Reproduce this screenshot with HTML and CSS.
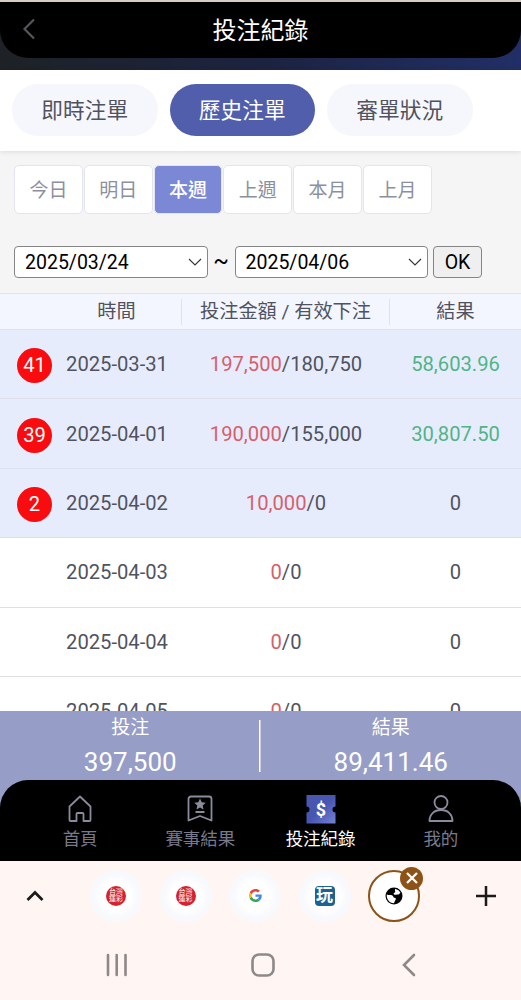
FILE: index.html
```
<!DOCTYPE html>
<html lang="zh-Hant">
<head>
  <meta charset="utf-8">
  <meta name="viewport" content="width=device-width, initial-scale=1">
  <title>投注紀錄</title>
  <link rel="stylesheet" href="styles.css">
</head>
<body>
<div class="app">
  <div class="top">
    <header class="header">
      <svg class="back" width="14" height="22" viewBox="0 0 14 22"><path d="M12 1.500 2.500 11l9.500 9.500"/></svg>
      <h1>投注紀錄</h1>
    </header>
  </div>

  <nav class="tabs">
    <a class="tab">即時注單</a>
    <a class="tab active">歷史注單</a>
    <a class="tab">審單狀況</a>
  </nav>

  <section class="filter">
    <div class="days">
      <a class="day">今日</a>
      <a class="day">明日</a>
      <a class="day active">本週</a>
      <a class="day">上週</a>
      <a class="day">本月</a>
      <a class="day">上月</a>
    </div>
    <div class="range">
      <div class="select">2025/03/24<svg width="14" height="8" viewBox="0 0 14 8"><path d="M1 1l6 6 6-6"/></svg></div>
      <span class="tilde">~</span>
      <div class="select">2025/04/06<svg width="14" height="8" viewBox="0 0 14 8"><path d="M1 1l6 6 6-6"/></svg></div>
      <button class="ok">OK</button>
    </div>
  </section>

  <main class="list">
    <div class="row head">
      <span></span>
      <span class="time">時間</span>
      <span class="amount">投注金額 / 有效下注</span>
      <span class="result">結果</span>
    </div>
    <div class="row has-bet">
      <span class="count">41</span>
      <span class="time">2025-03-31</span>
      <span class="amount"><em>197,500</em>/180,750</span>
      <span class="result win">58,603.96</span>
    </div>
    <div class="row has-bet">
      <span class="count">39</span>
      <span class="time">2025-04-01</span>
      <span class="amount"><em>190,000</em>/155,000</span>
      <span class="result win">30,807.50</span>
    </div>
    <div class="row has-bet">
      <span class="count">2</span>
      <span class="time">2025-04-02</span>
      <span class="amount"><em>10,000</em>/0</span>
      <span class="result">0</span>
    </div>
    <div class="row">
      <span></span>
      <span class="time">2025-04-03</span>
      <span class="amount"><em>0</em>/0</span>
      <span class="result">0</span>
    </div>
    <div class="row">
      <span></span>
      <span class="time">2025-04-04</span>
      <span class="amount"><em>0</em>/0</span>
      <span class="result">0</span>
    </div>
    <div class="row">
      <span></span>
      <span class="time">2025-04-05</span>
      <span class="amount"><em>0</em>/0</span>
      <span class="result">0</span>
    </div>
  </main>

  <div class="bottom">
    <div class="total">
      <div class="sum"><span>投注</span><b>397,500</b></div>
      <div class="sum"><span>結果</span><b>89,411.46</b></div>
    </div>
    <nav class="menu">
      <a class="item">
        <svg width="30" height="30" viewBox="0 0 30 30"><path d="M4.500 12.500 15 2.500l10.500 10V26a1 1 0 0 1-1 1H18.500v-7a1 1 0 0 0-1-1h-5a1 1 0 0 0-1 1v7H5.500a1 1 0 0 1-1-1z"/></svg>
        首頁
      </a>
      <a class="item">
        <svg width="30" height="30" viewBox="0 0 30 30"><path d="M6 2.500h18a2.500 2.500 0 0 1 2.500 2.500v21.500L15 22 3.500 26.500V5A2.500 2.500 0 0 1 6 2.500zM10.500 18h9"/><path class="solid" d="m15 4.500 1.700 3.800 4 .5-3 2.700.8 4.100-3.500-2-3.500 2 .8-4.100-3-2.700 4-.5z"/></svg>
        賽事結果
      </a>
      <a class="item active">
        <svg width="30" height="30" viewBox="0 0 30 30">
          <defs><linearGradient id="ticket" x1="0" y1="0" x2="1" y2="1"><stop offset="0" stop-color="#4a58ae"/><stop offset=".5" stop-color="#4856b2"/><stop offset="1" stop-color="#7482d6"/></linearGradient></defs>
          <path class="ticket" d="M.5 1h29v11.500a3 3 0 0 0 0 6V29.500H.5v-11a3 3 0 0 0 0-6z"/>
          <text x="15" y="21.500">$</text>
        </svg>
        投注紀錄
      </a>
      <a class="item">
        <svg width="30" height="30" viewBox="0 0 30 30"><circle cx="15" cy="8.500" r="6.500"/><path d="M3.500 27c0-6.500 4.500-11 11.500-11s11.500 4.500 11.500 11z"/></svg>
        我的
      </a>
    </nav>
  </div>

  <div class="browser">
    <svg class="up" width="18" height="12" viewBox="0 0 18 12"><path d="M1.500 10 9 2.500l7.500 7.500"/></svg>
    <div class="site"><span class="lottery">台灣<br>運彩</span></div>
    <div class="site"><span class="lottery">台灣<br>運彩</span></div>
    <div class="site">
      <svg width="13" height="13" viewBox="0 0 48 48">
        <path fill="#ea4335" d="M24 9.500c3.500 0 6.700 1.200 9.200 3.600l6.900-6.900C35.900 2.400 30.500 0 24 0 14.600 0 6.500 5.400 2.600 13.200l8 6.200C12.400 13.700 17.700 9.500 24 9.500z"/>
        <path fill="#4285f4" d="M47 24.600c0-1.600-.2-3.100-.4-4.600H24v9h12.900c-.6 3-2.300 5.500-4.800 7.200l7.700 6C44.400 38 47 31.800 47 24.600z"/>
        <path fill="#fbbc05" d="M10.500 28.600c-.5-1.500-.8-3-.8-4.600s.3-3.100.8-4.600l-8-6.200C.9 16.500 0 20.100 0 24s.9 7.500 2.600 10.800z"/>
        <path fill="#34a853" d="M24 48c6.500 0 11.900-2.100 15.900-5.800l-7.700-6c-2.200 1.500-4.900 2.300-8.200 2.300-6.300 0-11.600-4.200-13.500-9.900l-8 6.200C6.500 42.600 14.600 48 24 48z"/>
      </svg>
    </div>
    <div class="site"><span class="play">玩</span></div>
    <div class="site current">
      <svg width="18" height="18" viewBox="0 0 18 18"><circle cx="9" cy="9" r="8.500"/><path class="land" d="M1.800 7.500c2 .8 4 .2 5.500 1 1.300.7.700 2 2.200 2.300 1.600.3 1.800 1.300.8 2.400-.8.900-.5 2-1.500 3C4.500 16.200 1.200 12 1.800 7.500zM10.200 2c2.300.2 4.400 1.700 5.300 3.900-1.200.3-1.200 1.800-2.800 1.600-1.600-.2-2.200.8-3.600 0-.9-.6-.3-1.800.8-2 1.200-.3-.6-2 .3-3.500z"/></svg>
      <span class="close"><svg width="12" height="12" viewBox="0 0 12 12"><path d="M1 1l10 10m0-10-10 10"/></svg></span>
    </div>
    <svg class="plus" width="20" height="20" viewBox="0 0 20 20"><path d="M10 0v20M0 10h20"/></svg>
  </div>

  <div class="system">
    <svg width="22" height="24" viewBox="0 0 22 24"><path d="M2 2v20M10.700 2v20M19.500 2v20"/></svg>
    <svg width="24" height="24" viewBox="0 0 24 24"><rect x="1.500" y="1.500" width="21" height="21" rx="6.500"/></svg>
    <svg width="14" height="24" viewBox="0 0 14 24"><path d="M12 2 2 12l10 10"/></svg>
  </div>
</div>
</body>
</html>
```
FILE: styles.css
```
* {
  box-sizing: border-box;
}

body {
  margin: 0;
  font-family: Roboto, "Noto Sans CJK TC", sans-serif;
  color: #50535f;
}

svg {
  display: block;
  flex: none;
}

.app {
  width: 521px;
  height: 1000px;
  overflow: hidden;
  display: flex;
  flex-direction: column;
  background: #f5f5f6;
}

.top {
  height: 70px;
  flex: none;
  border-top: 2px solid #d6cec5;
  background: linear-gradient(90deg, #1e2226, #1c2340 50%, #212f66);
}

.header {
  height: 56px;
  padding: 0 22px;
  background: #000;
  border-radius: 0 0 28px 28px;
  display: grid;
  grid-template-columns: 14px 1fr 14px;
  align-items: center;
}

.header h1 {
  margin: 0;
  padding-top: 3px;
  font-size: 24px;
  font-weight: 400;
  line-height: 53px;
  text-align: center;
  color: #fff;
}

.back {
  margin-top: -2px;
  fill: none;
  stroke: #55555c;
  stroke-width: 2.2;
}

.tabs {
  height: 81px;
  flex: none;
  display: flex;
  gap: 12px;
  padding: 14px 12px 0;
  background: #fff;
  box-shadow: 0 1px 5px rgba(0, 0, 0, .1);
}

.tab {
  width: 145.500px;
  height: 52px;
  border-radius: 26px;
  background: #f6f7fc;
  font-size: 21.700px;
  line-height: 53px;
  text-align: center;
}

.tab.active {
  background: #505eac;
  color: #fff;
}

.filter {
  height: 142px;
  flex: none;
  padding: 14px 14px 0;
}

.days {
  display: flex;
  gap: 1px;
}

.day {
  width: 68.800px;
  height: 49px;
  border: 1.5px solid #e4e4f0;
  border-radius: 5px;
  background: #fff;
  color: #8b909e;
  font-size: 19px;
  line-height: 49px;
  text-align: center;
}

.day.active {
  background: #7a88d6;
  color: #fff;
  font-weight: 500;
}

.range {
  display: flex;
  align-items: center;
  margin-top: 32px;
  color: #000;
  font-size: 19.500px;
}

.select {
  width: 193.500px;
  height: 32px;
  padding: 0 5px 0 10px;
  border: 1.5px solid #858585;
  border-radius: 4px;
  background: #fff;
  display: flex;
  align-items: center;
  justify-content: space-between;
}

.select svg {
  fill: none;
  stroke: #333;
  stroke-width: 1.1;
}

.tilde {
  width: 27px;
  font-size: 23px;
  line-height: 30px;
  text-align: center;
}

.ok {
  width: 49px;
  height: 32px;
  margin-left: 5px;
  padding: 0;
  border: 1.5px solid #858585;
  border-radius: 4px;
  background: #efefef;
  color: #000;
  font: inherit;
}

.list {
  height: 418px;
  flex: none;
  overflow: hidden;
  background: #fff;
}

.row {
  height: 69.400px;
  border-bottom: 1.500px solid #dfdfe4;
  display: grid;
  grid-template-columns: 52px 130px 208px 131px;
  align-items: center;
  font-size: 20.200px;
  line-height: 24px;
  text-align: center;
}

.row.head {
  height: 37px;
  border-top: 1px solid #dfe3f0;
  border-bottom: 1px solid #dfe3f0;
  background: #f3f6ff;
  font-size: 19.200px;
  line-height: 26px;
}

.head .time,
.head .amount {
  border-right: 1px solid #dfe2ec;
}

.row.has-bet {
  background: #e7ecfd;
  border-color: #dde0ec;
}

.count {
  width: 35px;
  height: 35px;
  margin: 3px 0 0 17px;
  border-radius: 50%;
  background: #f80c10;
  color: #fff;
  line-height: 35px;
}

.amount em {
  font-style: normal;
  color: #d4606c;
}

.win {
  color: #50b487;
}

.bottom {
  flex: none;
  background: #969dc6;
}

.total {
  height: 69px;
  display: flex;
  color: #fff;
}

.sum {
  flex: 1;
  display: flex;
  flex-direction: column;
  align-items: center;
}

.sum:first-child {
  background: linear-gradient(#fff, #fff) no-repeat right 0 top 9px / 1.5px 52px;
}

.sum span {
  font-size: 19px;
  line-height: 34px;
}

.sum b {
  font-size: 26px;
  font-weight: 400;
  line-height: 35px;
}

.menu {
  height: 81px;
  padding: 14px 20px 0;
  background: #000;
  border-radius: 28px 28px 0 0;
  display: flex;
}

.item {
  flex: 1;
  display: flex;
  flex-direction: column;
  align-items: center;
  font-size: 17.500px;
  line-height: 30px;
  color: #787a8c;
}

.item svg {
  fill: none;
  stroke: #8a8b9c;
  stroke-width: 1.8;
  stroke-linejoin: round;
}

.item .solid {
  fill: #8a8b9c;
  stroke: none;
}

.item .ticket {
  fill: url(#ticket);
  stroke: none;
}

.item text {
  fill: #fff;
  stroke: none;
  font: bold 18px Roboto, sans-serif;
  text-anchor: middle;
}

.item.active {
  color: #fff;
}

.browser {
  height: 69px;
  flex: none;
  padding: 0 25px 0 26px;
  background: #fff5f3;
  display: flex;
  align-items: center;
}

.up {
  margin-right: 46px;
  fill: none;
  stroke: #1c1a19;
  stroke-width: 2.7;
}

.site {
  width: 52px;
  height: 52px;
  flex: none;
  margin-right: 17.500px;
  border-radius: 50%;
  background: radial-gradient(closest-side, #fff 55%, #f8f9fd 85%);
  display: flex;
  align-items: center;
  justify-content: center;
}

.lottery {
  width: 20px;
  height: 20px;
  padding-top: 3px;
  border-radius: 50%;
  background: #d3232f;
  color: #fff;
  font-size: 7px;
  line-height: 7px;
  text-align: center;
}

.play {
  width: 20px;
  height: 20px;
  border-radius: 4px;
  background: #1c6490;
  color: #fff;
  font-size: 17px;
  font-weight: 700;
  line-height: 19px;
  text-align: center;
}

.site.current {
  position: relative;
  border: 2.500px solid #8d5215;
  background: #fff;
}

.current .land {
  fill: #fff;
}

.close {
  position: absolute;
  top: -5px;
  right: -5px;
  width: 23px;
  height: 23px;
  border-radius: 50%;
  background: #8d5215;
  display: flex;
  align-items: center;
  justify-content: center;
}

.close svg {
  stroke: #fff;
  stroke-width: 2.3;
}

.plus {
  margin-left: auto;
  stroke: #1c1a19;
  stroke-width: 2.5;
}

.system {
  flex: 1;
  padding: 0 105px 0 106px;
  background: #fff5f3;
  display: grid;
  grid-template-columns: 144.500px 1fr auto;
  align-items: center;
}

.system svg {
  fill: none;
  stroke: #8d8988;
  stroke-width: 2.6;
  stroke-linecap: round;
}
```
